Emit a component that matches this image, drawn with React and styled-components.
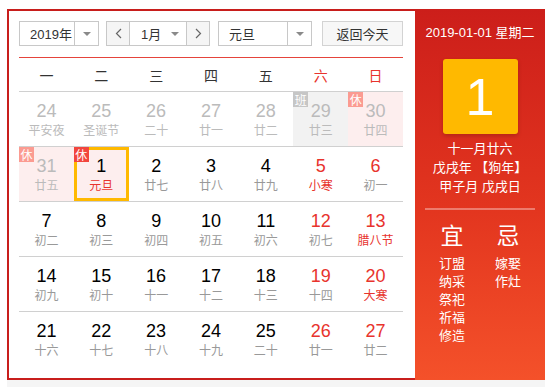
import React from 'react'
import styled, { createGlobalStyle } from 'styled-components'

const GlobalStyle = createGlobalStyle`
  body {
    margin: 0;
    background: #fff;
    font-family: "Liberation Sans", "Noto Sans CJK SC", sans-serif;
  }
`

const RED = '#e8332d'

const Page = styled.div`
  padding: 9px 0 0 7px;
  width: 538px;
`

const Widget = styled.div`
  display: flex;
`

const Main = styled.div`
  width: 384px;
  padding: 10px 12px 12px 10px;
  border: 2px solid #c81e1c;
  border-right: none;
  background: #fff;
`

const Toolbar = styled.div`
  display: flex;
  height: 25px;
  margin-bottom: 11px;
`

const Select = styled.div`
  display: flex;
  width: ${p => p.$w}px;
  margin-right: ${p => p.$mr}px;
  box-sizing: border-box;
  border: 1px solid #c8c8c8;
  font-size: 13px;
  color: #333;
`

const SelectText = styled.div`
  flex: 1;
  display: flex;
  align-items: center;
  padding-left: ${p => p.$pl || 10}px;
`

const ArrowBox = styled.div`
  width: ${p => p.$w || 23}px;
  display: flex;
  align-items: center;
  justify-content: center;
  border-left: ${p => (p.$plain ? 'none' : '1px solid #c8c8c8')};
`

const Caret = styled.span`
  width: 0;
  height: 0;
  border-left: 4px solid transparent;
  border-right: 4px solid transparent;
  border-top: 4px solid #8a8a8a;
`

const StepButton = styled.div`
  width: 22px;
  display: flex;
  align-items: center;
  justify-content: center;
  background: #f5f5f5;
  border-${p => p.$side}: 1px solid #c8c8c8;
`

const TodayButton = styled.div`
  width: 81px;
  box-sizing: border-box;
  display: flex;
  align-items: center;
  justify-content: center;
  border: 1px solid #d3d3d3;
  background: #f7f7f7;
  font-size: 13px;
  color: #333;
`

const WeekHead = styled.div`
  display: grid;
  grid-template-columns: repeat(7, 1fr);
  height: 33px;
  border-top: 1px solid #e5443b;
  border-bottom: 1px solid #d0d0d0;
`

const HeadCell = styled.div`
  display: flex;
  align-items: center;
  justify-content: center;
  font-size: 14px;
  color: ${p => (p.$weekend ? RED : '#333')};
`

const Week = styled.div`
  display: grid;
  grid-template-columns: repeat(7, 1fr);
  height: 54px;
  border-bottom: 1px solid #d0d0d0;
  &:last-child {
    border-bottom: none;
  }
`

const Cell = styled.div`
  position: relative;
  display: flex;
  flex-direction: column;
  align-items: center;
  padding-top: 8px;
  box-sizing: border-box;
  background: ${p => (p.$bg === 'rest' ? '#fdeeee' : p.$bg === 'work' ? '#f2f2f2' : 'transparent')};
  box-shadow: ${p => (p.$selected ? 'inset 0 0 0 3px #ffb900' : 'none')};
`

const Day = styled.div`
  font-size: 18px;
  line-height: 22px;
  color: ${p => (p.$muted ? '#bbb' : p.$weekend ? RED : '#000')};
`

const Lunar = styled.div`
  font-size: 12px;
  line-height: 18px;
  color: ${p => (p.$muted ? '#bbb' : p.$festival ? RED : '#999')};
`

const Badge = styled.span`
  position: absolute;
  top: 0;
  left: 0;
  width: 15px;
  height: 15px;
  display: flex;
  align-items: center;
  justify-content: center;
  font-size: 12px;
  color: #fff;
  background: ${p => (p.$kind === 'work' ? '#c6c6c6' : p.$muted ? '#fb9b91' : '#f2453d')};
`

const Side = styled.div`
  width: 130px;
  display: flex;
  flex-direction: column;
  align-items: center;
  background: linear-gradient(180deg, #cc1e1a 0%, #e3361f 55%, #f4512a 100%);
  color: #fff;
  padding-top: 14px;
`

const SideDate = styled.div`
  font-size: 13px;
  line-height: 20px;
`

const BigDay = styled.div`
  width: 75px;
  height: 75px;
  margin-top: 16px;
  margin-bottom: 5px;
  border-radius: 3px;
  background: #ffb900;
  box-shadow: 0 2px 4px rgba(0, 0, 0, 0.18);
  display: flex;
  align-items: center;
  justify-content: center;
  font-size: 52px;
`

const InfoLine = styled.div`
  font-size: 13px;
  line-height: 19px;
  white-space: pre;
`

const Divider = styled.div`
  width: 110px;
  height: 2px;
  margin: 12px 0 12px;
  background: rgba(255, 255, 255, 0.35);
`

const Advice = styled.div`
  display: flex;
`

const AdviceCol = styled.div`
  width: 56px;
  display: flex;
  flex-direction: column;
  align-items: center;
`

const AdviceTitle = styled.div`
  font-size: 23px;
  line-height: 28px;
  margin-bottom: 5px;
`

const AdviceItem = styled.div`
  font-size: 13px;
  line-height: 18px;
`

const Footer = styled.div`
  height: 10px;
  background: #f5f5f5;
`

const Chevron = ({ dir }) => (
  <svg width="7" height="11" viewBox="0 0 7 11">
    <polyline
      points={dir === 'left' ? '6,1 1.5,5.5 6,10' : '1,1 5.5,5.5 1,10'}
      fill="none"
      stroke="#666"
      strokeWidth="1.2"
    />
  </svg>
)

const weeks = [
  [
    { d: 24, l: '平安夜', m: 1 },
    { d: 25, l: '圣诞节', m: 1 },
    { d: 26, l: '二十', m: 1 },
    { d: 27, l: '廿一', m: 1 },
    { d: 28, l: '廿二', m: 1 },
    { d: 29, l: '廿三', m: 1, tag: 'work' },
    { d: 30, l: '廿四', m: 1, tag: 'rest' },
  ],
  [
    { d: 31, l: '廿五', m: 1, tag: 'rest' },
    { d: 1, l: '元旦', f: 1, tag: 'rest', sel: 1 },
    { d: 2, l: '廿七' },
    { d: 3, l: '廿八' },
    { d: 4, l: '廿九' },
    { d: 5, l: '小寒', f: 1 },
    { d: 6, l: '初一' },
  ],
  [
    { d: 7, l: '初二' },
    { d: 8, l: '初三' },
    { d: 9, l: '初四' },
    { d: 10, l: '初五' },
    { d: 11, l: '初六' },
    { d: 12, l: '初七' },
    { d: 13, l: '腊八节', f: 1 },
  ],
  [
    { d: 14, l: '初九' },
    { d: 15, l: '初十' },
    { d: 16, l: '十一' },
    { d: 17, l: '十二' },
    { d: 18, l: '十三' },
    { d: 19, l: '十四' },
    { d: 20, l: '大寒', f: 1 },
  ],
  [
    { d: 21, l: '十六' },
    { d: 22, l: '十七' },
    { d: 23, l: '十八' },
    { d: 24, l: '十九' },
    { d: 25, l: '二十' },
    { d: 26, l: '廿一' },
    { d: 27, l: '廿二' },
  ],
]

const heads = ['一', '二', '三', '四', '五', '六', '日']

const App = () => (
  <>
    <GlobalStyle />
    <Page>
      <Widget>
        <Main>
          <Toolbar>
            <Select $w={80} $mr={7}>
              <SelectText>2019年</SelectText>
              <ArrowBox>
                <Caret />
              </ArrowBox>
            </Select>
            <Select $w={104} $mr={8}>
              <StepButton $side="right">
                <Chevron dir="left" />
              </StepButton>
              <SelectText $pl={11}>1月</SelectText>
              <ArrowBox $plain $w={22}>
                <Caret />
              </ArrowBox>
              <StepButton $side="left">
                <Chevron dir="right" />
              </StepButton>
            </Select>
            <Select $w={94} $mr={10}>
              <SelectText>元旦</SelectText>
              <ArrowBox>
                <Caret />
              </ArrowBox>
            </Select>
            <TodayButton>返回今天</TodayButton>
          </Toolbar>
          <WeekHead>
            {heads.map((h, i) => (
              <HeadCell key={h} $weekend={i > 4}>
                {h}
              </HeadCell>
            ))}
          </WeekHead>
          {weeks.map((week, wi) => (
            <Week key={wi}>
              {week.map((c, i) => (
                <Cell key={i} $bg={c.tag} $selected={c.sel}>
                  {c.tag && (
                    <Badge $kind={c.tag} $muted={c.m}>
                      {c.tag === 'work' ? '班' : '休'}
                    </Badge>
                  )}
                  <Day $muted={c.m} $weekend={i > 4}>
                    {c.d}
                  </Day>
                  <Lunar $muted={c.m} $festival={c.f}>
                    {c.l}
                  </Lunar>
                </Cell>
              ))}
            </Week>
          ))}
        </Main>
        <Side>
          <SideDate>2019-01-01 星期二</SideDate>
          <BigDay>1</BigDay>
          <InfoLine>十一月廿六</InfoLine>
          <InfoLine>戊戌年 【狗年】</InfoLine>
          <InfoLine>甲子月 戊戌日</InfoLine>
          <Divider />
          <Advice>
            <AdviceCol>
              <AdviceTitle>宜</AdviceTitle>
              {['订盟', '纳采', '祭祀', '祈福', '修造'].map(t => (
                <AdviceItem key={t}>{t}</AdviceItem>
              ))}
            </AdviceCol>
            <AdviceCol>
              <AdviceTitle>忌</AdviceTitle>
              {['嫁娶', '作灶'].map(t => (
                <AdviceItem key={t}>{t}</AdviceItem>
              ))}
            </AdviceCol>
          </Advice>
        </Side>
      </Widget>
      <Footer />
    </Page>
  </>
)

export default App
